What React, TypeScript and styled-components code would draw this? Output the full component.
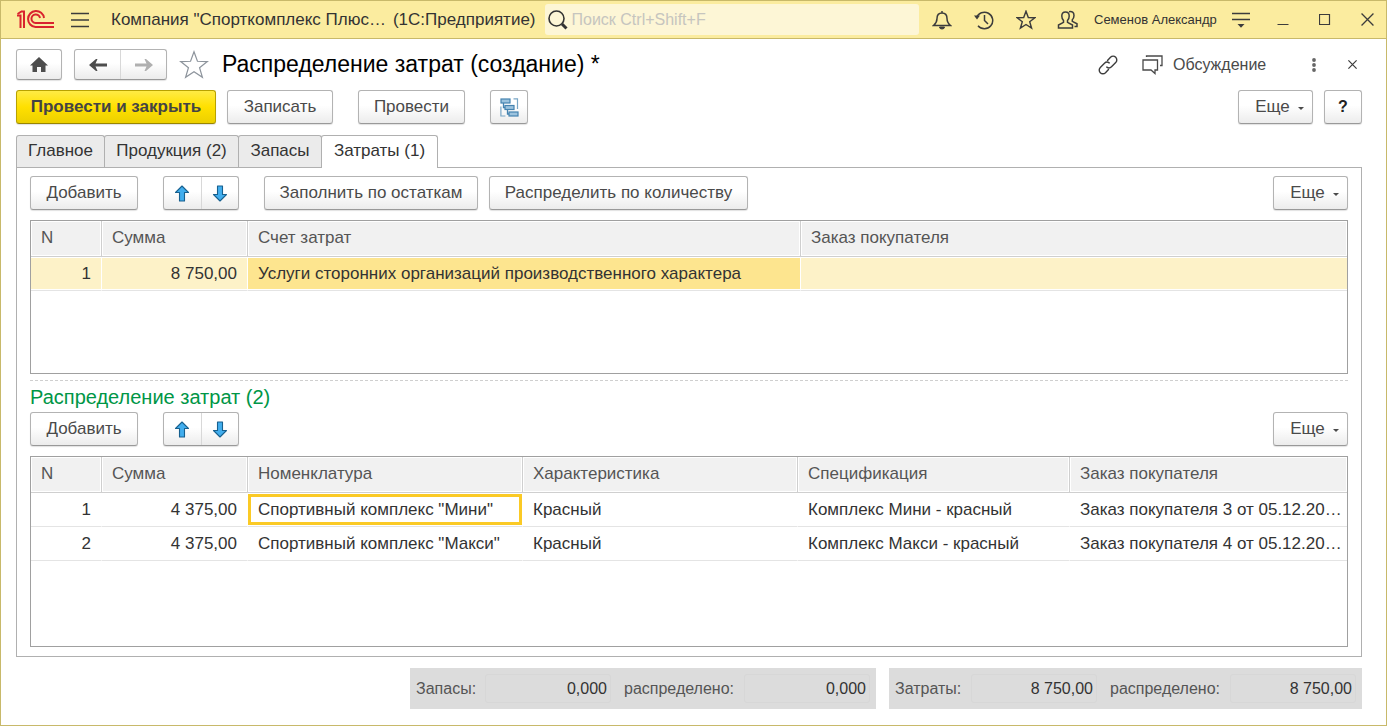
import React from "react";
import styled, { createGlobalStyle, css } from "styled-components";

const GlobalStyle = createGlobalStyle`
  *, *::before, *::after { box-sizing: border-box; }
  body { margin: 0; background: #fff; }
  body, input {
    font-family: "Liberation Sans", Arial, sans-serif;
    font-size: 16px;
    color: #333;
  }
  button, table {
    font-family: "Liberation Sans", Arial, sans-serif;
    font-size: 17px;
    color: #333;
  }
  svg { display: block; flex: none; }
`;

const Window = styled.div`
  min-height: 100vh;
  display: flex;
  flex-direction: column;
  border: 1px solid #c8b96a;
  background: #fff;
`;

const TitleBar = styled.header`
  display: flex;
  align-items: center;
  height: 38px;
  padding: 0 6px 0 16px;
  background: #fbec9f;
  border-bottom: 1px solid #c8b96a;
`;

const BarButton = styled.button`
  width: 26px;
  height: 30px;
  padding: 0;
  display: flex;
  flex: none;
  align-items: center;
  justify-content: center;
  border: 0;
  background: none;
  color: #3c3c3c;
`;

const MenuButton = styled(BarButton)`
  margin-left: 12px;
`;

const AppName = styled.div`
  display: flex;
  gap: 7px;
  margin: 0 9px 0 18px;
  font-size: 17px;
  white-space: nowrap;
`;

const Search = styled.label`
  display: flex;
  flex: 1;
  align-items: center;
  min-width: 120px;
  height: 31px;
  padding-left: 3px;
  border-radius: 3px;
  background: #fdf6d6;
  color: #333;
`;

const SearchInput = styled.input`
  flex: 1;
  min-width: 0;
  padding: 0 4px;
  border: 0;
  outline: 0;
  background: none;
  &::placeholder { color: #c6c5bf; opacity: 1; }
`;

const BarGroup = styled.div`
  display: flex;
  gap: 16px;
  margin-left: 10px;
`;

const UserName = styled.a`
  margin-left: 13px;
  font-size: 13px;
  min-width: 124px;
  color: #333;
  text-decoration: none;
  white-space: nowrap;
`;

const Page = styled.main`
  flex: 1;
  display: flex;
  flex-direction: column;
  padding: 10px 24px 16px 15px;
`;

const Row = styled.div<{ $top?: number }>`
  display: flex;
  align-items: center;
  margin-top: ${(p) => p.$top ?? 0}px;
`;

const Spacer = styled.div`
  flex: 1;
`;

const face = css`
  border: 1px solid #b3b3b3;
  border-bottom-color: #999;
  border-radius: 3px;
  background: linear-gradient(#fff 45%, #ececec);
  box-shadow: 0 1px 1px #e2e2e2;
`;

const Button = styled.button<{ $w?: number; $gap?: number; $primary?: boolean }>`
  ${face}
  display: flex;
  flex: none;
  align-items: center;
  justify-content: center;
  gap: 8px;
  height: 34px;
  min-width: ${(p) => p.$w ?? 38}px;
  padding: 0;
  margin-left: ${(p) => p.$gap ?? 0}px;
  color: #4a4a4a;
  white-space: nowrap;
  ${(p) =>
    p.$primary &&
    css`
      font-weight: bold;
      color: #444;
      border-color: #b8a200;
      border-bottom-color: #998500;
      background: linear-gradient(#ffeb45, #ffe000 50%, #ecd000);
    `}
`;

const HelpButton = styled(Button)`
  font-size: 16px;
  font-weight: bold;
  color: #222;
`;

const Caret = styled.span`
  width: 0;
  height: 0;
  margin: 2px -8px 0 0;
  border: 3px solid transparent;
  border-top-color: #4a4a4a;
  border-bottom: 0;
`;

const NavButton = styled(Button)`
  height: 31px;
  min-width: 46px;
`;

const Segmented = styled.div<{ $gap: number; $h: number; $w: number }>`
  ${face}
  display: flex;
  flex: none;
  width: ${(p) => p.$w}px;
  height: ${(p) => p.$h}px;
  margin-left: ${(p) => p.$gap}px;
`;

const Segment = styled.button<{ $line?: string }>`
  flex: 1;
  display: flex;
  align-items: center;
  justify-content: center;
  padding: 0;
  border: 0;
  background: none;
  & + & { border-left: 1px solid ${(p) => p.$line ?? "#a8a8a8"}; }
`;

const PageTitle = styled.h1`
  margin: 0 0 0 13px;
  font-size: 23px;
  line-height: 31px;
  font-weight: normal;
  color: #000;
  white-space: nowrap;
`;

const StarButton = styled(BarButton)`
  width: 30px;
  margin-left: 12px;
  color: #8d949c;
`;

const Discussion = styled.a`
  display: flex;
  align-items: center;
  gap: 10px;
  margin: 0 32px 0 21px;
  color: #4a4a4a;
  text-decoration: none;
`;

const DiscussionText = styled.span`
  min-width: 96px;
`;

const CloseForm = styled(BarButton)`
  width: 20px;
  margin-left: 15px;
`;

const Tabs = styled.nav`
  display: flex;
  margin-top: 11px;
`;

const Tab = styled.button<{ $active?: boolean; $w: number }>`
  height: 32px;
  min-width: ${(p) => p.$w}px;
  padding: 0 0 2px;
  border: 1px solid #b0b0b0;
  border-bottom: 0;
  border-radius: 3px 3px 0 0;
  background: #ebebeb;
  & + & { margin-left: -1px; }
  ${(p) =>
    p.$active &&
    css`
      height: 33px;
      margin-bottom: -1px;
      padding-bottom: 3px;
      background: #fff;
      position: relative;
    `}
`;

const Panel = styled.section`
  flex: 1;
  display: flex;
  flex-direction: column;
  padding: 8px 13px 9px;
  border: 1px solid #b0b0b0;
`;

const TableFrame = styled.div<{ $grow?: boolean }>`
  flex: ${(p) => (p.$grow ? "1 0 154px" : "none")};
  height: 154px;
  margin-top: 10px;
  border: 1px solid #a0a0a0;
  overflow: hidden;
`;

const Grid = styled.table`
  width: 100%;
  table-layout: fixed;
  border-collapse: separate;
  border-spacing: 0;
`;

const Th = styled.th`
  height: 36px;
  padding: 0 10px 2px;
  text-align: left;
  font-weight: normal;
  color: #555;
  background: #f1f1f1;
  border-right: 1px solid #cfcfcf;
  border-bottom: 1px solid #cfcfcf;
  box-shadow: inset 0 0 0 1px #fff;
  &:last-child { border-right: 0; }
`;

const tones = {
  plain: "#fff",
  focus: "#fff",
  row: "#fdf2c8",
  cell: "#fde58f",
};

const Td = styled.td<{ $num?: boolean; $tone?: keyof typeof tones }>`
  height: 34px;
  padding: 0 ${(p) => (p.$num ? 10 : 4)}px 0 10px;
  text-align: ${(p) => (p.$num ? "right" : "left")};
  white-space: nowrap;
  overflow: hidden;
  text-overflow: ellipsis;
  border-right: 1px solid #fff;
  border-bottom: 1px solid #e4e4e4;
  background: ${(p) => tones[p.$tone ?? "plain"]};
  box-shadow: inset 0 1px #fff, inset 0 -1px #fff
    ${(p) =>
      p.$tone === "focus" &&
      ", inset 3px 0 #fbca25, inset -3px 0 #fbca25, inset 0 4px #fbca25, inset 0 -4px #fbca25"};
  &:last-child { border-right: 0; }
`;

const Divider = styled.hr`
  width: 100%;
  margin: 6px 0 0;
  border: 0;
  border-top: 1px dashed #cfcfcf;
`;

const SectionTitle = styled.h2`
  margin: 0;
  padding-top: 2px;
  font-size: 20px;
  line-height: 29px;
  font-weight: normal;
  color: #009646;
`;

const Totals = styled.footer`
  display: flex;
  justify-content: flex-end;
  gap: 13px;
  margin-top: 11px;
`;

const TotalGroup = styled.div`
  display: flex;
  gap: 13px;
  padding: 6px;
  background: #dcdcdc;
`;

const TotalField = styled.label<{ $w: number }>`
  display: grid;
  grid-template-columns: ${(p) => p.$w}px 126px;
  gap: 6px;
  align-items: center;
  color: #555;
  white-space: nowrap;
`;

const TotalInput = styled.input`
  width: 100%;
  height: 29px;
  padding: 0 3px;
  text-align: right;
  border: 1px solid #d7d7d7;
  border-radius: 3px;
  background: transparent;
  outline: 0;
`;

const line = { fill: "none", stroke: "currentColor", strokeWidth: 1.5 } as const;

const Logo = () => (
  <svg width="38" height="22" viewBox="0 0 38 22" fill="none" stroke="#d9232e" strokeWidth="2" aria-label="1С">
    <path d="M0 6.500h3.500V19" />
    <path d="M.500 5 4.500 2.500H7V19" />
    <path d="M27 9A8 8 0 1 0 18.500 18H37" />
    <path d="M23 9A4.300 4.300 0 1 0 18.500 14H37" />
  </svg>
);

const Burger = () => (
  <svg width="18" height="16" viewBox="0 0 18 16" {...line}>
    <path d="M0 1.500h18M0 8h18M0 14.500h18" />
  </svg>
);

const Magnifier = () => (
  <svg width="20" height="20" viewBox="0 0 20 20" fill="none" stroke="currentColor">
    <circle cx="8.500" cy="8.500" r="7.500" strokeWidth="1.600" />
    <path d="m14 14 4.500 4.500" strokeWidth="3" />
  </svg>
);

const Bell = () => (
  <svg width="20" height="20" viewBox="0 0 20 20" {...line}>
    <path d="M10 1v2M1.500 15.500h17c-3-2.500-3.500-4-3.500-7C15 5 13 3 10 3S5 5 5 8.500c0 3-.500 4.500-3.500 7Z" />
    <path d="M7.500 17h5a2.500 2 0 0 1-5 0Z" fill="currentColor" strokeWidth="1" />
  </svg>
);

const History = () => (
  <svg width="20" height="20" viewBox="0 0 20 20" {...line}>
    <path d="M2.500 8A8.300 8.300 0 1 1 4 15.800" />
    <path d="M10.500 5v5.500L14 14" />
    <path d="M0 5.500h6L3 9.500Z" fill="currentColor" stroke="none" />
  </svg>
);

const Star = ({ size, width }: { size: number; width: number }) => (
  <svg width={size} height={size} viewBox="0 0 20 20" fill="none" stroke="currentColor" strokeWidth={width}>
    <path d="m10 1.200 2.300 6.300 6.600.200-5.200 4.100 1.900 6.400L10 14.500l-5.600 3.700 1.900-6.400L1.100 7.700l6.600-.200Z" />
  </svg>
);

const Users = () => (
  <svg width="22" height="20" viewBox="0 0 22 20" {...line}>
    <path d="M8.500 2C6 2 4.800 3.800 4.800 6c0 2 .700 3.500 1.700 4.500v1.800L1.500 15v3h14v-3l-5-2.700v-1.800c1-1 1.700-2.500 1.700-4.500 0-2.200-1.200-4-3.700-4Z" />
    <path d="M12 1.800c3-.800 5 .700 5 3.700 0 2-.700 3.200-1.700 4.200v1.600l4.700 2.500v2.700h-2.500" />
  </svg>
);

const Settings = () => (
  <svg width="18" height="18" viewBox="0 0 18 18" {...line}>
    <path d="M0 2.500h18M0 8.500h18" />
    <path d="M5.500 13h7L9 16.800Z" fill="currentColor" stroke="none" />
  </svg>
);

const Minimize = () => (
  <svg width="12" height="12" viewBox="0 0 12 12" {...line}><path d="M.500 10.500h11" strokeWidth="1" /></svg>
);

const Maximize = () => (
  <svg width="12" height="12" viewBox="0 0 12 12" {...line}><path d="M.500.500h10v10H.500Z" strokeWidth="1.200" /></svg>
);

const Cross = ({ size }: { size: number }) => (
  <svg width={size} height={size} viewBox="0 0 12 12" {...line}>
    <path d="m.500.500 11 11M11.500.500l-11 11" strokeWidth={size < 12 ? 1.6 : 1.2} />
  </svg>
);

const Home = () => (
  <svg width="18" height="15" viewBox="0 0 18 15" fill="#4d4d4d">
    <path d="M9 0 18 8.500h-2.500V15H11v-5H7v5H2.500V8.500H0Z" />
  </svg>
);

const NavArrow = ({ forward }: { forward?: boolean }) => (
  <svg width="18" height="12" viewBox="0 0 18 12" fill={forward ? "#b0b0b0" : "#4d4d4d"}>
    {forward ? (
      <path d="M18 6 11 12h-1.500l2-4.500H0v-3h11.500L9.500 0H11Z" />
    ) : (
      <path d="M0 6 7 0h1.500l-2 4.500H18v3H6.500l2 4.500H7Z" />
    )}
  </svg>
);

const MoveArrow = ({ down }: { down?: boolean }) => (
  <svg width="16" height="17" viewBox="0 0 16 17" fill="#42aeee" stroke="#17608f" strokeWidth="1.100" strokeLinejoin="round">
    {down ? (
      <path d="M5.500 1h5v8.500h4L8 16 1.500 9.500h4Z" />
    ) : (
      <path d="M8 1l6.500 6.500h-4V16h-5V7.500h-4Z" />
    )}
  </svg>
);

const Structure = () => (
  <svg width="19" height="19" viewBox="0 0 19 19" fill="none" stroke="#4583b0">
    <g fill="#9cc3de" strokeWidth="1.200">
      <rect x="1" y="1" width="9" height="4" />
      <rect x="5" y="7.500" width="9" height="4" />
      <rect x="9" y="14" width="9" height="4" />
    </g>
    <path d="M3.500 5v4.500H5M7.500 11.500V16H9" strokeWidth="1.300" />
    <path d="M13.500.900h4v10M.900 8.500v9.500h4.500" stroke="#79a6c6" strokeWidth="1.200" />
  </svg>
);

const LinkIcon = () => (
  <svg width="20" height="20" viewBox="0 0 20 20" {...line} strokeWidth={1.4} strokeLinecap="round">
    <path d="M9.500 5.500 12.500 2.300a3.600 3.600 0 0 1 5.200 5.200l-4.200 4.200a3.600 3.600 0 0 1-4.700.400" />
    <path d="M10.500 14.500 7.500 17.700a3.600 3.600 0 0 1-5.200-5.200L6.500 8.300a3.600 3.600 0 0 1 4.700-.400" />
  </svg>
);

const Chat = () => (
  <svg width="21" height="20" viewBox="0 0 21 20" {...line} strokeWidth={1.3}>
    <path d="M1 5h14.500v10H13v3.500L9 15H1Z" />
    <path d="M4.500 2V1H20v9.500h-2" />
  </svg>
);

const Dots = () => (
  <svg width="4" height="14" viewBox="0 0 4 14" fill="#666">
    <circle cx="2" cy="2" r="1.900" /><circle cx="2" cy="7" r="1.900" /><circle cx="2" cy="12" r="1.900" />
  </svg>
);

const MoreButton = () => (
  <Button $w={75}>Еще<Caret /></Button>
);

const MoveButtons = () => (
  <Segmented $gap={25} $w={76} $h={34}>
    <Segment aria-label="Переместить вверх"><MoveArrow /></Segment>
    <Segment aria-label="Переместить вниз"><MoveArrow down /></Segment>
  </Segmented>
);

const distribution = [
  ["1", "4 375,00", 'Спортивный комплекс "Мини"', "Красный", "Комплекс Мини - красный", "Заказ покупателя 3 от 05.12.20…"],
  ["2", "4 375,00", 'Спортивный комплекс "Макси"', "Красный", "Комплекс Макси - красный", "Заказ покупателя 4 от 05.12.20…"],
];

const totals = [
  { label: "Запасы:", w: 63, value: "0,000" },
  { label: "Затраты:", w: 70, value: "8 750,00" },
];

export default function App() {
  return (
    <Window>
      <GlobalStyle />
      <TitleBar>
        <Logo />
        <MenuButton aria-label="Меню"><Burger /></MenuButton>
        <AppName>
          <span>Компания "Спорткомплекс Плюс…</span>
          <span>(1С:Предприятие)</span>
        </AppName>
        <Search>
          <Magnifier />
          <SearchInput placeholder="Поиск Ctrl+Shift+F" aria-label="Поиск" />
        </Search>
        <BarGroup>
          <BarButton aria-label="Уведомления"><Bell /></BarButton>
          <BarButton aria-label="История"><History /></BarButton>
          <BarButton aria-label="Избранное"><Star size={20} width={1.4} /></BarButton>
          <BarButton aria-label="Пользователи"><Users /></BarButton>
        </BarGroup>
        <UserName href="#user">Семенов Александр</UserName>
        <BarGroup>
          <BarButton aria-label="Настройки"><Settings /></BarButton>
          <BarButton aria-label="Свернуть"><Minimize /></BarButton>
          <BarButton aria-label="Развернуть"><Maximize /></BarButton>
          <BarButton aria-label="Закрыть"><Cross size={13} /></BarButton>
        </BarGroup>
      </TitleBar>

      <Page>
        <Row>
          <NavButton aria-label="Домой"><Home /></NavButton>
          <Segmented $gap={12} $w={93} $h={31}>
            <Segment aria-label="Назад"><NavArrow /></Segment>
            <Segment aria-label="Вперед" $line="#d8d8d8"><NavArrow forward /></Segment>
          </Segmented>
          <StarButton aria-label="В избранное"><Star size={30} width={0.8} /></StarButton>
          <PageTitle>Распределение затрат (создание) *</PageTitle>
          <Spacer />
          <BarButton aria-label="Ссылка"><LinkIcon /></BarButton>
          <Discussion href="#discussion"><Chat /><DiscussionText>Обсуждение</DiscussionText></Discussion>
          <BarButton aria-label="Действия"><Dots /></BarButton>
          <CloseForm aria-label="Закрыть форму"><Cross size={9} /></CloseForm>
        </Row>

        <Row $top={10}>
          <Button $w={200} $primary>Провести и закрыть</Button>
          <Button $w={106} $gap={11}>Записать</Button>
          <Button $w={107} $gap={25}>Провести</Button>
          <Button $gap={25} aria-label="Структура подчиненности"><Structure /></Button>
          <Spacer />
          <MoreButton />
          <HelpButton $gap={11}>?</HelpButton>
        </Row>

        <Tabs>
          <Tab $w={89}>Главное</Tab>
          <Tab $w={135}>Продукция (2)</Tab>
          <Tab $w={84}>Запасы</Tab>
          <Tab $w={117} $active>Затраты (1)</Tab>
        </Tabs>

        <Panel>
          <Row>
            <Button $w={108}>Добавить</Button>
            <MoveButtons />
            <Button $w={214} $gap={25}>Заполнить по остаткам</Button>
            <Button $w={259} $gap={11}>Распределить по количеству</Button>
            <Spacer />
            <MoreButton />
          </Row>
          <TableFrame>
            <Grid>
              <colgroup>
                <col width="71" /><col width="146" /><col /><col width="546" />
              </colgroup>
              <thead>
                <tr><Th>N</Th><Th>Сумма</Th><Th>Счет затрат</Th><Th>Заказ покупателя</Th></tr>
              </thead>
              <tbody>
                <tr>
                  <Td $num $tone="row">1</Td>
                  <Td $num $tone="row">8 750,00</Td>
                  <Td $tone="cell">Услуги сторонних организаций производственного характера</Td>
                  <Td $tone="row" />
                </tr>
              </tbody>
            </Grid>
          </TableFrame>

          <Divider />
          <SectionTitle>Распределение затрат (2)</SectionTitle>
          <Row>
            <Button $w={108}>Добавить</Button>
            <MoveButtons />
            <Spacer />
            <MoreButton />
          </Row>
          <TableFrame $grow>
            <Grid>
              <colgroup>
                <col width="71" /><col width="146" /><col /><col /><col width="272" /><col width="277" />
              </colgroup>
              <thead>
                <tr>
                  <Th>N</Th><Th>Сумма</Th><Th>Номенклатура</Th><Th>Характеристика</Th><Th>Спецификация</Th><Th>Заказ покупателя</Th>
                </tr>
              </thead>
              <tbody>
                {distribution.map((row, r) => (
                  <tr key={row[0]}>
                    {row.map((cell, c) => (
                      <Td key={c} $num={c < 2} $tone={r === 0 && c === 2 ? "focus" : undefined}>{cell}</Td>
                    ))}
                  </tr>
                ))}
              </tbody>
            </Grid>
          </TableFrame>
        </Panel>

        <Totals>
          {totals.map((t) => (
            <TotalGroup key={t.label}>
              <TotalField $w={t.w}>{t.label}<TotalInput readOnly value={t.value} /></TotalField>
              <TotalField $w={114}>распределено:<TotalInput readOnly value={t.value} /></TotalField>
            </TotalGroup>
          ))}
        </Totals>
      </Page>
    </Window>
  );
}
